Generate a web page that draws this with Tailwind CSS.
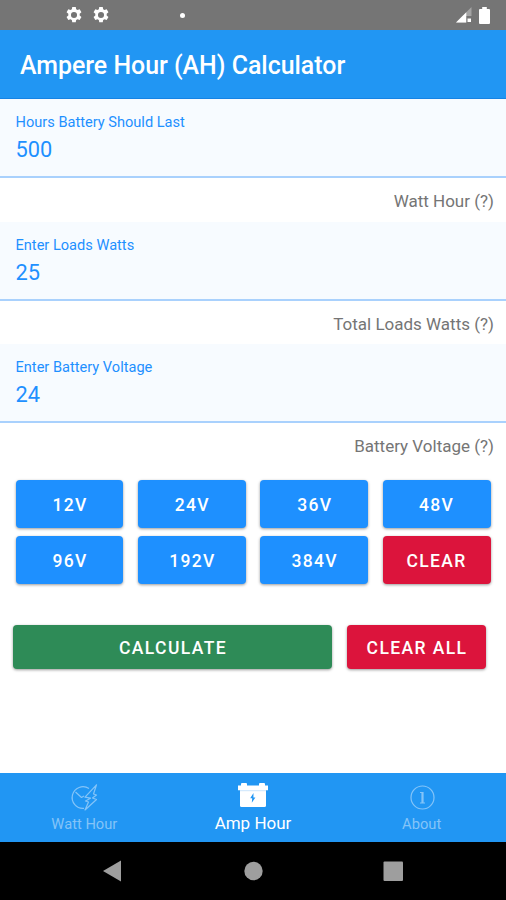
<!DOCTYPE html>
<html lang="en">
<head>
<meta charset="utf-8">
<title>Ampere Hour (AH) Calculator</title>
<script src="https://cdn.jsdelivr.net/npm/@tailwindcss/browser@4"></script>
</head>
<body class="bg-white">
<div class="flex h-[900px] w-[506px] flex-col overflow-hidden bg-white font-['Roboto',sans-serif]">
  <div class="flex h-[30px] shrink-0 items-center bg-[#757575] pl-[66px] pr-[16px] text-white">
    <svg class="h-4 w-4" viewBox="2 2 20 20" fill="currentColor"><path fill-rule="evenodd" d="M9.8 2h4.4l.5 2.8 1.7 1 2.7-1 2.2 3.8-2.2 1.8v2.2l2.2 1.8-2.2 3.8-2.7-1-1.7 1-.5 2.8H9.8l-.5-2.8-1.7-1-2.7 1-2.2-3.8 2.2-1.8v-2.2L2.700 8.600l2.200-3.800 2.700 1 1.700-1zM12 8.200a3.800 3.800 0 1 0 0 7.600 3.800 3.800 0 0 0 0-7.600z"/></svg>
    <svg class="ml-[11px] h-4 w-4" viewBox="2 2 20 20" fill="currentColor"><path fill-rule="evenodd" d="M9.8 2h4.4l.5 2.8 1.7 1 2.7-1 2.2 3.8-2.2 1.8v2.2l2.2 1.8-2.2 3.8-2.7-1-1.7 1-.5 2.8H9.8l-.5-2.8-1.7-1-2.7 1-2.2-3.8 2.2-1.8v-2.2L2.700 8.600l2.200-3.800 2.700 1 1.700-1zM12 8.200a3.800 3.800 0 1 0 0 7.600 3.800 3.800 0 0 0 0-7.600z"/></svg>
    <span class="ml-[71px] h-[5px] w-[5px] rounded-full bg-white"></span>
    <svg class="ml-auto h-[16px] w-[16px]" viewBox="0 0 16 16"><path d="M15.500 0v15.500H0z" fill="#a4a4a4"/><path d="M10.300 5.200v10.300H0z" fill="#fff"/><path d="M10.500 9h5.500v7h-5.500z" fill="#757575"/><path d="M11.500 11.500h3.500v3.500h-3.500z" fill="#fff"/></svg>
    <svg class="ml-[7px] h-[17px] w-[11px]" viewBox="0 0 11 17"><path d="M3.200 0h4.600v2H10q1 0 1 1v13q0 1-1 1H1q-1 0-1-1V3q0-1 1-1h2.200z" fill="#fff"/></svg>
  </div>
  <header class="flex h-[69px] shrink-0 items-center border-b border-[#1683e4] bg-[#2196f3] pl-[20px] pt-[3px]">
    <h1 class="whitespace-nowrap text-[24.900px] font-medium leading-[30px] text-white">Ampere Hour (AH) Calculator</h1>
  </header>
  <main class="flex flex-1 flex-col">
    <section class="h-[79px] border-b-2 border-[#a9d1fd] bg-[#f7fbff] pl-[15.500px] pt-[14px] text-[#1e90ff]">
      <div class="text-[14.600px] leading-[18px]">Hours Battery Should Last</div>
      <div class="mt-[5px] text-[21.800px] leading-[28px]">500</div>
    </section>
    <div class="h-[44px] pr-[12px] pt-[12px] text-right text-[17px] leading-[22px] text-[#757575]">Watt Hour (?)</div>
    <section class="h-[79px] border-b-2 border-[#a9d1fd] bg-[#f7fbff] pl-[15.500px] pt-[14px] text-[#1e90ff]">
      <div class="text-[14.600px] leading-[18px]">Enter Loads Watts</div>
      <div class="mt-[5px] text-[21.800px] leading-[28px]">25</div>
    </section>
    <div class="h-[43px] pr-[12px] pt-[12px] text-right text-[17px] leading-[22px] text-[#757575]">Total Loads Watts (?)</div>
    <section class="h-[79px] border-b-2 border-[#a9d1fd] bg-[#f7fbff] pl-[15.500px] pt-[14px] text-[#1e90ff]">
      <div class="text-[14.600px] leading-[18px]">Enter Battery Voltage</div>
      <div class="mt-[5px] text-[21.800px] leading-[28px]">24</div>
    </section>
    <div class="h-[57px] pr-[12px] pt-[12px] text-right text-[17px] leading-[22px] text-[#757575]">Battery Voltage (?)</div>
    <div class="mx-[15.500px] grid grid-cols-4 gap-x-[14.500px] gap-y-[8px] text-[17.500px] font-medium tracking-[1.300px] text-white">
      <button class="h-[48px] rounded-[4px] bg-[#1e90ff] pl-px pt-[3px] shadow-[0_1px_3px_rgba(0,0,0,0.4)]">12V</button>
      <button class="h-[48px] rounded-[4px] bg-[#1e90ff] pl-px pt-[3px] shadow-[0_1px_3px_rgba(0,0,0,0.4)]">24V</button>
      <button class="h-[48px] rounded-[4px] bg-[#1e90ff] pl-px pt-[3px] shadow-[0_1px_3px_rgba(0,0,0,0.4)]">36V</button>
      <button class="h-[48px] rounded-[4px] bg-[#1e90ff] pt-[3px] shadow-[0_1px_3px_rgba(0,0,0,0.4)]">48V</button>
      <button class="h-[48px] rounded-[4px] bg-[#1e90ff] pl-px pt-[3px] shadow-[0_1px_3px_rgba(0,0,0,0.4)]">96V</button>
      <button class="h-[48px] rounded-[4px] bg-[#1e90ff] pl-px pt-[3px] shadow-[0_1px_3px_rgba(0,0,0,0.4)]">192V</button>
      <button class="h-[48px] rounded-[4px] bg-[#1e90ff] pl-px pt-[3px] shadow-[0_1px_3px_rgba(0,0,0,0.4)]">384V</button>
      <button class="h-[48px] rounded-[4px] bg-[#dc143c] pt-[3px] shadow-[0_1px_3px_rgba(0,0,0,0.4)]">CLEAR</button>
    </div>
    <div class="ml-[13px] mt-[41px] flex gap-[15px] text-[17.500px] font-medium tracking-[1.400px] text-white">
      <button class="h-[44px] w-[319px] rounded-[4px] bg-[#2e8b57] pl-px pt-[3px] shadow-[0_1px_3px_rgba(0,0,0,0.4)]">CALCULATE</button>
      <button class="h-[44px] w-[139px] rounded-[4px] bg-[#dc143c] pl-px pt-[3px] shadow-[0_1px_3px_rgba(0,0,0,0.4)]">CLEAR ALL</button>
    </div>
  </main>
  <nav class="grid h-[69px] shrink-0 grid-cols-3 bg-[#2196f3] text-[14.700px] leading-[20px] text-[#84c4f8]">
    <div class="flex flex-col items-center pt-[10px]">
      <svg class="h-[30px] w-[30px]" viewBox="0 0 30 30" fill="none" stroke="currentColor" stroke-width="1.200" stroke-linejoin="round"><path d="M20 5.600A10.800 10.800 0 1 0 15 25.300"/><path d="M6.500 9l6 5.500 2.500-1.500"/><path d="M27.500 1.800L16 14.200l5.500 1L16.500 18l3 1-3.500 8L27.500 16.500l-4-1.500 4-3-3-1z"/></svg>
      <span class="mt-[1px]">Watt Hour</span>
    </div>
    <div class="flex flex-col items-center pt-[9px] text-white">
      <svg class="h-[30px] w-[30px]" viewBox="0 0 30 30"><path d="M0 3.500h3V2q0-1 1-1h4q1 0 1 1v1.500h12V2q0-1 1-1h4q1 0 1 1v1.500h3v4.800H0z" fill="#fff"/><path d="M2 8h26V23.500q0 1.500-1.500 1.500h-23Q2 25 2 23.500z" fill="#fff"/><path d="M2 8.700h26" stroke="#b4dafb" stroke-width=".7"/><path d="M15.500 11l-3.300 5.300h2l-.4 4.500 3.600-5.300h-2z" fill="#2196f3"/></svg>
      <span class="mt-[1px] text-[17px]">Amp Hour</span>
    </div>
    <div class="flex flex-col items-center pt-[10px]">
      <svg class="h-[30px] w-[30px]" viewBox="0 0 30 30" fill="none" stroke="currentColor"><circle cx="15.500" cy="14.500" r="11.500" stroke-width="1.200"/><path d="M15.500 9v11" stroke-width="2.200"/><path d="M13 9.500h2.500M13 20h5" stroke-width="1"/></svg>
      <span class="mt-[1px]">About</span>
    </div>
  </nav>
  <footer class="h-[58px] shrink-0 bg-black">
    <svg class="block h-[58px] w-[506px]" viewBox="0 0 506 58" fill="#9e9e9e"><path d="M103 29l18-10.500v21z"/><circle cx="253.500" cy="29" r="9.200"/><rect x="383.500" y="19.500" width="19.500" height="19.500" rx="1"/></svg>
  </footer>
</div>
</body>
</html>
